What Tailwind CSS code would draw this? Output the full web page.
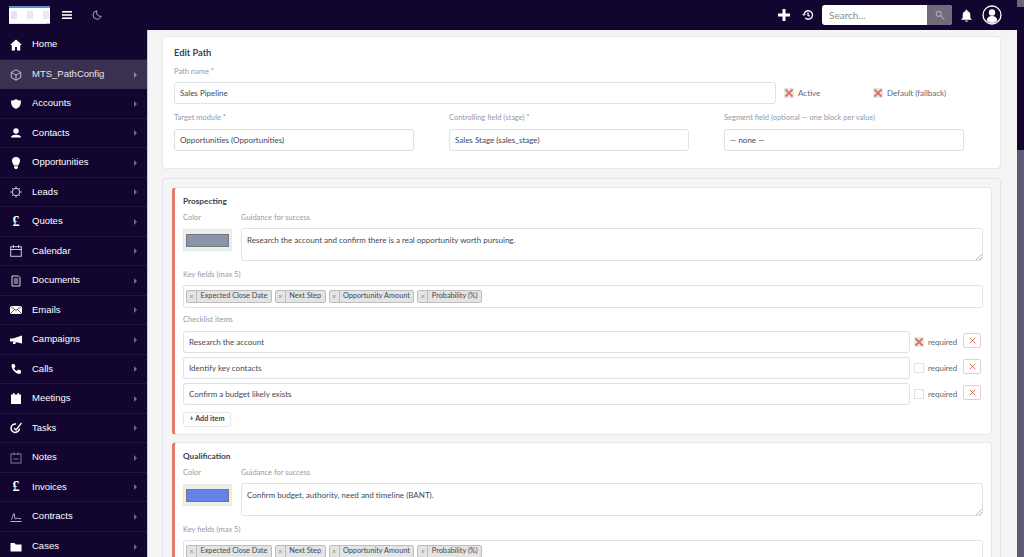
<!DOCTYPE html>
<html lang="en">
<head>
  <meta charset="UTF-8" />
  <title>Edit Path</title>
  <script src="https://cdn.jsdelivr.net/npm/@tailwindcss/browser@4"></script>
</head>
<body class="flex h-[557px] w-[1024px] overflow-hidden bg-[#f4f4f4] font-['Lato',sans-serif] text-[#3f4757]">
 <div class="flex min-w-0 flex-1 flex-col">

  <!-- Top bar -->
  <header class="flex h-[30px] shrink-0 items-center bg-[#12052f] text-white">
    <div class="ml-[9px] flex h-[18px] w-[41px] flex-col bg-white">
      <div class="h-[2px] bg-[#5f8fd0]"></div>
      <div class="flex gap-[10px] pt-[3px] pl-[2px]">
        <div class="h-[8px] w-[6px] bg-[#dfe6f0]"></div>
        <div class="h-[8px] w-[6px] bg-[#e6eaf2]"></div>
        <div class="h-[8px] w-[6px] bg-[#e6eaf2]"></div>
      </div>
      <div class="mt-auto flex h-[1px] justify-end bg-[#e8e4e0]"><div class="h-full w-[4px] bg-[#e9a79c]"></div></div>
    </div>
    <svg class="ml-[12px] h-[10px] w-[10px]" viewBox="0 0 10 10" fill="#fff"><rect y="1" width="10" height="1.6"/><rect y="4.2" width="10" height="1.6"/><rect y="7.4" width="10" height="1.6"/></svg>
    <svg class="ml-[20px] h-[10px] w-[10px]" viewBox="0 0 24 24" fill="none" stroke="#c9c6d2" stroke-width="2"><path d="M12 2a10 10 0 1 0 10 13A9 9 0 0 1 12 2z"/></svg>
    <svg class="ml-auto h-[12px] w-[12px]" viewBox="0 0 12 12" fill="#fff"><rect x="4.500" width="3" height="12"/><rect y="4.500" width="12" height="3"/></svg>
    <svg class="ml-[12px] h-[12px] w-[12px]" viewBox="0 0 24 24" fill="none" stroke="#fff" stroke-width="2.6"><path d="M4 12a8.500 8.500 0 1 1 2.500 6"/><path d="M12 7v5.500l3.500 2"/><path d="M1 10l3 3 3-3" stroke-width="2"/></svg>
    <div class="ml-[8px] flex h-[20px] w-[130px] overflow-hidden rounded-[3px] bg-white">
      <div class="flex flex-1 items-center pl-[7px] text-[10px] text-[#8b8b96]">Search...</div>
      <div class="flex w-[25px] items-center justify-center bg-[#6f6b7c]">
        <svg class="h-[10px] w-[10px]" viewBox="0 0 24 24" fill="none" stroke="#a9a7b3" stroke-width="3"><circle cx="9" cy="9" r="6"/><path d="M14 14l8 8"/></svg>
      </div>
    </div>
    <svg class="ml-[8px] h-[13px] w-[13px]" viewBox="0 0 24 24" fill="#fff"><path d="M12 1.500a2 2 0 0 1 2 2v.6a7 7 0 0 1 5 6.900v5l2.500 3v1h-19v-1l2.500-3v-5a7 7 0 0 1 5-6.900v-.6a2 2 0 0 1 2-2zM9.500 21h5a2.500 2.500 0 0 1-5 0z"/></svg>
    <svg class="mr-[15px] ml-[9px] h-[20px] w-[20px]" viewBox="0 0 20 20" fill="none"><circle cx="10" cy="10" r="9" stroke="#fff" stroke-width="1.300"/><circle cx="10" cy="7.500" r="3.200" fill="#fff"/><path d="M4.500 16c.4-3.500 2.500-5 5.500-5s5.100 1.500 5.500 5a9 9 0 0 1-11 0z" fill="#fff"/></svg>
  </header>

  <div class="flex min-h-0 flex-1">
    <!-- Sidebar -->
    <nav class="w-[147px] shrink-0 bg-[#12052f] pt-[0.25px] font-['Liberation_Sans',sans-serif] text-[9.500px] text-white">
      <a class="flex h-[29.500px] items-center border-b border-[#221640] pl-[10px]">
        <svg class="h-[12px] w-[12px]" viewBox="0 0 24 24" fill="#fff"><path d="M12 1L0 12h3.500v11H10v-7h4v7h6.500V12H24z"/></svg>
        <span class="ml-[10px] flex-1">Home</span>
      </a>
      <a class="flex h-[29.500px] items-center bg-[#3a3050] pl-[10px] text-[#e8e6ee]">
        <svg class="h-[12px] w-[12px]" viewBox="0 0 24 24" fill="none" stroke="#d0cdd8" stroke-width="1.800"><path d="M12 1.500l9.500 5.300v10.400L12 22.500l-9.500-5.300V6.800z"/><path d="M2.500 6.800l9.500 5.400 9.500-5.400M12 12.200v10.300"/></svg>
        <span class="ml-[10px] flex-1">MTS_PathConfig</span>
        <span class="mr-[10px] h-0 w-0 border-y-[3px] border-l-[3px] border-y-transparent border-l-[#8d8799]"></span>
      </a>
      <a class="flex h-[29.500px] items-center border-b border-[#221640] pl-[10px]">
        <svg class="h-[12px] w-[12px]" viewBox="0 0 24 24" fill="#fff"><path d="M12 2c3 2 6 3 10 3 0 8-2 14-10 17C4 19 2 13 2 5c4 0 7-1 10-3z"/></svg>
        <span class="ml-[10px] flex-1">Accounts</span>
        <span class="mr-[10px] h-0 w-0 border-y-[3px] border-l-[3px] border-y-transparent border-l-[#6f6a80]"></span>
      </a>
      <a class="flex h-[29.500px] items-center border-b border-[#221640] pl-[10px]">
        <svg class="h-[12px] w-[12px]" viewBox="0 0 24 24" fill="#fff"><circle cx="12" cy="8" r="5.500"/><path d="M2 21c0-4 5-5.500 10-5.500S22 17 22 21z"/></svg>
        <span class="ml-[10px] flex-1">Contacts</span>
        <span class="mr-[10px] h-0 w-0 border-y-[3px] border-l-[3px] border-y-transparent border-l-[#6f6a80]"></span>
      </a>
      <a class="flex h-[29.500px] items-center border-b border-[#221640] pl-[10px]">
        <svg class="h-[12px] w-[12px]" viewBox="0 0 24 24" fill="#fff"><path d="M12 0a8 8 0 0 1 8 8c0 3.500-2.500 5.500-3.500 9h-9C6.500 13.500 4 11.500 4 8a8 8 0 0 1 8-8zM8 18.500h8V21l-2 3h-4l-2-3z"/></svg>
        <span class="ml-[10px] flex-1">Opportunities</span>
        <span class="mr-[10px] h-0 w-0 border-y-[3px] border-l-[3px] border-y-transparent border-l-[#6f6a80]"></span>
      </a>
      <a class="flex h-[29.500px] items-center border-b border-[#221640] pl-[10px]">
        <svg class="h-[12px] w-[12px]" viewBox="0 0 24 24" fill="none" stroke="#d8d6de" stroke-width="2"><circle cx="12" cy="12" r="7.500"/><path d="M12 1v3M12 20v3M1 12h3M20 12h3M4.500 4.500l2 2M17.500 17.500l2 2M4.500 19.500l2-2M17.500 6.500l2-2"/></svg>
        <span class="ml-[10px] flex-1">Leads</span>
        <span class="mr-[10px] h-0 w-0 border-y-[3px] border-l-[3px] border-y-transparent border-l-[#6f6a80]"></span>
      </a>
      <a class="flex h-[29.500px] items-center border-b border-[#221640] pl-[10px]">
        <span class="w-[12px] text-center font-['Liberation_Serif',serif] text-[14px] font-bold leading-none">£</span>
        <span class="ml-[10px] flex-1">Quotes</span>
        <span class="mr-[10px] h-0 w-0 border-y-[3px] border-l-[3px] border-y-transparent border-l-[#6f6a80]"></span>
      </a>
      <a class="flex h-[29.500px] items-center border-b border-[#221640] pl-[10px]">
        <svg class="h-[12px] w-[12px]" viewBox="0 0 24 24" fill="none" stroke="#e8e6ee" stroke-width="1.800"><rect x="1.500" y="3.500" width="21" height="19"/><path d="M1.500 9h21M7 0v6M17 0v6"/></svg>
        <span class="ml-[10px] flex-1">Calendar</span>
        <span class="mr-[10px] h-0 w-0 border-y-[3px] border-l-[3px] border-y-transparent border-l-[#6f6a80]"></span>
      </a>
      <a class="flex h-[29.500px] items-center border-b border-[#221640] pl-[10px]">
        <svg class="h-[12px] w-[12px]" viewBox="0 0 24 24" fill="none" stroke="#d8d6de" stroke-width="2"><path d="M4 2h13l3 3v17H4z"/><path d="M7.500 8h9M7.500 12h9M7.500 16h9"/></svg>
        <span class="ml-[10px] flex-1">Documents</span>
        <span class="mr-[10px] h-0 w-0 border-y-[3px] border-l-[3px] border-y-transparent border-l-[#6f6a80]"></span>
      </a>
      <a class="flex h-[29.500px] items-center border-b border-[#221640] pl-[10px]">
        <svg class="h-[12px] w-[12px]" viewBox="0 0 24 24"><rect y="4" width="24" height="16" fill="#fff"/><path d="M0 4l12 9 12-9M0 20l9-9M24 20l-9-9" fill="none" stroke="#12052f" stroke-width="1.400"/></svg>
        <span class="ml-[10px] flex-1">Emails</span>
        <span class="mr-[10px] h-0 w-0 border-y-[3px] border-l-[3px] border-y-transparent border-l-[#6f6a80]"></span>
      </a>
      <a class="flex h-[29.500px] items-center border-b border-[#221640] pl-[10px]">
        <svg class="h-[12px] w-[12px]" viewBox="0 0 24 24" fill="#fff"><path d="M0 9h6l18-6v16L6 15H0zM6 16h5v4H6z"/></svg>
        <span class="ml-[10px] flex-1">Campaigns</span>
        <span class="mr-[10px] h-0 w-0 border-y-[3px] border-l-[3px] border-y-transparent border-l-[#6f6a80]"></span>
      </a>
      <a class="flex h-[29.500px] items-center border-b border-[#221640] pl-[10px]">
        <svg class="h-[12px] w-[12px]" viewBox="0 0 24 24" fill="#fff"><path d="M5 2l4 0 2 6-3 2c1 3 3 5 6 6l2-3 6 2v4l-2 3C11 22 3 13 3 4z"/></svg>
        <span class="ml-[10px] flex-1">Calls</span>
        <span class="mr-[10px] h-0 w-0 border-y-[3px] border-l-[3px] border-y-transparent border-l-[#6f6a80]"></span>
      </a>
      <a class="flex h-[29.500px] items-center border-b border-[#221640] pl-[10px]">
        <svg class="h-[12px] w-[12px]" viewBox="0 0 24 24" fill="#fff"><path d="M2 3h4V0h3v3h6V0h3v3h4v19H2z"/></svg>
        <span class="ml-[10px] flex-1">Meetings</span>
        <span class="mr-[10px] h-0 w-0 border-y-[3px] border-l-[3px] border-y-transparent border-l-[#6f6a80]"></span>
      </a>
      <a class="flex h-[29.500px] items-center border-b border-[#221640] pl-[10px]">
        <svg class="h-[12px] w-[12px]" viewBox="0 0 24 24" fill="none" stroke="#fff" stroke-width="3"><path d="M19 13a8.500 8.500 0 1 1-7-9"/><path d="M8 12l4 4L23 2" stroke-width="2.600"/></svg>
        <span class="ml-[10px] flex-1">Tasks</span>
        <span class="mr-[10px] h-0 w-0 border-y-[3px] border-l-[3px] border-y-transparent border-l-[#6f6a80]"></span>
      </a>
      <a class="flex h-[29.500px] items-center border-b border-[#221640] pl-[10px]">
        <svg class="h-[12px] w-[12px]" viewBox="0 0 24 24" fill="none" stroke="#8f8a9c" stroke-width="1.800"><rect x="2" y="4" width="20" height="18"/><path d="M8 1v5M16 1v5M7 14h10"/></svg>
        <span class="ml-[10px] flex-1">Notes</span>
        <span class="mr-[10px] h-0 w-0 border-y-[3px] border-l-[3px] border-y-transparent border-l-[#6f6a80]"></span>
      </a>
      <a class="flex h-[29.500px] items-center border-b border-[#221640] pl-[10px]">
        <span class="w-[12px] text-center font-['Liberation_Serif',serif] text-[14px] font-bold leading-none">£</span>
        <span class="ml-[10px] flex-1">Invoices</span>
        <span class="mr-[10px] h-0 w-0 border-y-[3px] border-l-[3px] border-y-transparent border-l-[#6f6a80]"></span>
      </a>
      <a class="flex h-[29.500px] items-center border-b border-[#221640] pl-[10px]">
        <svg class="h-[12px] w-[12px]" viewBox="0 0 24 24" fill="none" stroke="#e8e6ee" stroke-width="1.600"><path d="M1 21h22"/><path d="M2 17c3 0 4-12 6-12s0 11 3 11 2-3 4-2 3 2 7 1"/></svg>
        <span class="ml-[10px] flex-1">Contracts</span>
        <span class="mr-[10px] h-0 w-0 border-y-[3px] border-l-[3px] border-y-transparent border-l-[#6f6a80]"></span>
      </a>
      <a class="flex h-[29.500px] items-center pl-[10px]">
        <svg class="h-[12px] w-[12px]" viewBox="0 0 24 24" fill="#fff"><path d="M1 4h8l2.500 3H23v14H1z"/></svg>
        <span class="ml-[10px] flex-1">Cases</span>
        <span class="mr-[10px] h-0 w-0 border-y-[3px] border-l-[3px] border-y-transparent border-l-[#6f6a80]"></span>
      </a>
    </nav>

    <div class="w-[1px] shrink-0 bg-[#c9c9d0]"></div>

    <!-- Content -->
    <main class="min-w-0 flex-1 overflow-hidden pt-[6px] pr-[16px] pl-[14px]">
      <section class="h-[133px] rounded-[4px] border border-[#e8e8ea] bg-white pt-[10px] pl-[11px]">
        <h2 class="text-[9.250px] leading-[12px] font-bold text-[#3a4252]">Edit Path</h2>
        <label class="mt-[7px] block pt-[1px] text-[7.500px] leading-[10px] text-[#949aa8]">Path name *</label>
        <div class="mt-[5px] flex items-center">
          <div class="flex h-[22px] w-[602px] items-center rounded-[3px] border border-[#dfe1e8] pl-[5px] text-[8px]">Sales Pipeline</div>
          <svg class="ml-[8px] h-[10px] w-[10px] bg-[#e8e8e8]" viewBox="0 0 10 10" fill="none" stroke="#e0705f" stroke-width="1.800"><path d="M1.500 1.500l7 7M8.500 1.500l-7 7"/></svg>
          <span class="ml-[4px] w-[75px] text-[8px] text-[#5f6676]">Active</span>
          <svg class="h-[10px] w-[10px] bg-[#e8e8e8]" viewBox="0 0 10 10" fill="none" stroke="#e0705f" stroke-width="1.800"><path d="M1.500 1.500l7 7M8.500 1.500l-7 7"/></svg>
          <span class="ml-[4px] text-[8px] text-[#5f6676]">Default (fallback)</span>
        </div>
        <div class="mt-[8px] flex gap-[35px]">
          <div class="w-[240px]">
            <label class="block pt-[1px] text-[7.500px] leading-[10px] text-[#949aa8]">Target module *</label>
            <div class="mt-[6px] flex h-[22px] items-center rounded-[3px] border border-[#dfe1e8] pl-[5px] text-[8px]">Opportunities (Opportunities)</div>
          </div>
          <div class="w-[240px]">
            <label class="block pt-[1px] text-[7.500px] leading-[10px] text-[#949aa8]">Controlling field (stage) *</label>
            <div class="mt-[6px] flex h-[22px] items-center rounded-[3px] border border-[#dfe1e8] pl-[5px] text-[8px]">Sales Stage (sales_stage)</div>
          </div>
          <div class="w-[240px]">
            <label class="block pt-[1px] text-[7.500px] leading-[10px] text-[#949aa8]">Segment field (optional — one block per value)</label>
            <div class="mt-[6px] flex h-[22px] items-center rounded-[3px] border border-[#dfe1e8] pl-[5px] text-[8px]">— none —</div>
          </div>
        </div>
      </section>

      <section class="mt-[9px] rounded-[4px] border border-[#e1e4ec] bg-[#f5f5f5] pt-[8px] pr-[8px] pb-[8px] pl-[9px]">
        <!-- Prospecting -->
        <div class="h-[248px] rounded-[4px] border border-l-[3px] border-[#e8e8ea] border-l-[#df7a6c] bg-white pt-[8px] pl-[8px]">
          <h3 class="text-[8.250px] leading-[11px] font-bold text-[#3a4252]">Prospecting</h3>
          <div class="mt-[5px] flex">
            <div class="w-[58px]">
              <label class="block pt-[1px] text-[7.500px] leading-[10px] text-[#949aa8]">Color</label>
              <div class="mt-[6px] flex h-[22px] w-[49px] items-center justify-center border border-[#dcefe9] bg-[#eeeeee]"><div class="h-[13px] w-[43px] border border-[#777] bg-[#8c94ad]"></div></div>
            </div>
            <div class="w-[742px]">
              <label class="block pt-[1px] text-[7.500px] leading-[10px] text-[#949aa8]">Guidance for success</label>
              <div class="relative mt-[5px] h-[33px] rounded-[3px] border border-[#dfe1e8] pt-[5px] pl-[5px] text-[8px] leading-[12px]">Research the account and confirm there is a real opportunity worth pursuing.
                <svg class="absolute right-0 bottom-0 h-[6px] w-[6px]" viewBox="0 0 6 6" stroke="#999" stroke-width=".7"><path d="M0 6l6-6M3 6l3-3"/></svg>
              </div>
            </div>
          </div>
          <label class="mt-[8px] block pt-[1px] text-[7.500px] leading-[10px] text-[#949aa8]">Key fields (max 5)</label>
          <div class="mt-[5px] flex h-[23px] w-[800px] items-start gap-[3px] rounded-[3px] border border-[#dfe1e8] pt-[4px] pl-[2px] text-[7.300px]">
            <span class="flex h-[13px] items-center rounded-[2px] border border-[#bdbdbd] bg-[#e4e4e4]"><span class="flex h-full w-[10px] items-center justify-center border-r border-[#bdbdbd] text-[7px] text-[#888]">×</span><span class="px-[3.500px]">Expected Close Date</span></span>
            <span class="flex h-[13px] items-center rounded-[2px] border border-[#bdbdbd] bg-[#e4e4e4]"><span class="flex h-full w-[10px] items-center justify-center border-r border-[#bdbdbd] text-[7px] text-[#888]">×</span><span class="px-[3.500px]">Next Step</span></span>
            <span class="flex h-[13px] items-center rounded-[2px] border border-[#bdbdbd] bg-[#e4e4e4]"><span class="flex h-full w-[10px] items-center justify-center border-r border-[#bdbdbd] text-[7px] text-[#888]">×</span><span class="px-[3.500px]">Opportunity Amount</span></span>
            <span class="flex h-[13px] items-center rounded-[2px] border border-[#bdbdbd] bg-[#e4e4e4]"><span class="flex h-full w-[10px] items-center justify-center border-r border-[#bdbdbd] text-[7px] text-[#888]">×</span><span class="px-[3.500px]">Probability (%)</span></span>
          </div>
          <label class="mt-[6px] block pt-[1px] text-[7.500px] leading-[10px] text-[#949aa8]">Checklist items</label>
          <div class="mt-[6px] flex flex-col gap-[4px]">
            <div class="flex h-[22px] items-center">
              <div class="flex h-full w-[727px] items-center rounded-[3px] border border-[#dfe1e8] pl-[5px] text-[8px]">Research the account</div>
              <svg class="ml-[4px] h-[10px] w-[10px] bg-[#e8e8e8]" viewBox="0 0 10 10" fill="none" stroke="#e0705f" stroke-width="1.800"><path d="M1.500 1.500l7 7M8.500 1.500l-7 7"/></svg>
              <span class="ml-[4px] w-[35px] text-[8px] text-[#5f6676]">required</span>
              <span class="mb-[3px] flex h-[15px] w-[18px] items-center justify-center rounded-[2px] border border-[#eecbc6]"><svg class="h-[7px] w-[7px]" viewBox="0 0 10 10" fill="none" stroke="#d9675a" stroke-width="1.300"><path d="M1 1l8 8M9 1l-8 8"/></svg></span>
            </div>
            <div class="flex h-[22px] items-center">
              <div class="flex h-full w-[727px] items-center rounded-[3px] border border-[#dfe1e8] pl-[5px] text-[8px]">Identify key contacts</div>
              <span class="ml-[4px] h-[10px] w-[10px] border border-[#dfe1e8]"></span>
              <span class="ml-[4px] w-[35px] text-[8px] text-[#5f6676]">required</span>
              <span class="mb-[3px] flex h-[15px] w-[18px] items-center justify-center rounded-[2px] border border-[#eecbc6]"><svg class="h-[7px] w-[7px]" viewBox="0 0 10 10" fill="none" stroke="#d9675a" stroke-width="1.300"><path d="M1 1l8 8M9 1l-8 8"/></svg></span>
            </div>
            <div class="flex h-[22px] items-center">
              <div class="flex h-full w-[727px] items-center rounded-[3px] border border-[#dfe1e8] pl-[5px] text-[8px]">Confirm a budget likely exists</div>
              <span class="ml-[4px] h-[10px] w-[10px] border border-[#dfe1e8]"></span>
              <span class="ml-[4px] w-[35px] text-[8px] text-[#5f6676]">required</span>
              <span class="mb-[3px] flex h-[15px] w-[18px] items-center justify-center rounded-[2px] border border-[#eecbc6]"><svg class="h-[7px] w-[7px]" viewBox="0 0 10 10" fill="none" stroke="#d9675a" stroke-width="1.300"><path d="M1 1l8 8M9 1l-8 8"/></svg></span>
            </div>
          </div>
          <button class="mt-[7px] flex h-[15px] w-[48px] items-center justify-center rounded-[3px] border border-[#e6e6ea] text-[7.250px] font-bold text-[#3a4252]">+ Add item</button>
        </div>

        <!-- Qualification -->
        <div class="mt-[7px] h-[249px] rounded-[4px] border border-l-[3px] border-[#e8e8ea] border-l-[#df7a6c] bg-white pt-[8px] pl-[8px]">
          <h3 class="text-[8.250px] leading-[11px] font-bold text-[#3a4252]">Qualification</h3>
          <div class="mt-[5px] flex">
            <div class="w-[58px]">
              <label class="block pt-[1px] text-[7.500px] leading-[10px] text-[#949aa8]">Color</label>
              <div class="mt-[6px] flex h-[22px] w-[49px] items-center justify-center border border-[#dcefe9] bg-[#eeeeee]"><div class="h-[13px] w-[43px] border border-[#777] bg-[#6482e8]"></div></div>
            </div>
            <div class="w-[742px]">
              <label class="block pt-[1px] text-[7.500px] leading-[10px] text-[#949aa8]">Guidance for success</label>
              <div class="relative mt-[5px] h-[33px] rounded-[3px] border border-[#dfe1e8] pt-[5px] pl-[5px] text-[8px] leading-[12px]">Confirm budget, authority, need and timeline (BANT).
                <svg class="absolute right-0 bottom-0 h-[6px] w-[6px]" viewBox="0 0 6 6" stroke="#999" stroke-width=".7"><path d="M0 6l6-6M3 6l3-3"/></svg>
              </div>
            </div>
          </div>
          <label class="mt-[8px] block pt-[1px] text-[7.500px] leading-[10px] text-[#949aa8]">Key fields (max 5)</label>
          <div class="mt-[5px] flex h-[23px] w-[800px] items-start gap-[3px] rounded-[3px] border border-[#dfe1e8] pt-[4px] pl-[2px] text-[7.300px]">
            <span class="flex h-[13px] items-center rounded-[2px] border border-[#bdbdbd] bg-[#e4e4e4]"><span class="flex h-full w-[10px] items-center justify-center border-r border-[#bdbdbd] text-[7px] text-[#888]">×</span><span class="px-[3.500px]">Expected Close Date</span></span>
            <span class="flex h-[13px] items-center rounded-[2px] border border-[#bdbdbd] bg-[#e4e4e4]"><span class="flex h-full w-[10px] items-center justify-center border-r border-[#bdbdbd] text-[7px] text-[#888]">×</span><span class="px-[3.500px]">Next Step</span></span>
            <span class="flex h-[13px] items-center rounded-[2px] border border-[#bdbdbd] bg-[#e4e4e4]"><span class="flex h-full w-[10px] items-center justify-center border-r border-[#bdbdbd] text-[7px] text-[#888]">×</span><span class="px-[3.500px]">Opportunity Amount</span></span>
            <span class="flex h-[13px] items-center rounded-[2px] border border-[#bdbdbd] bg-[#e4e4e4]"><span class="flex h-full w-[10px] items-center justify-center border-r border-[#bdbdbd] text-[7px] text-[#888]">×</span><span class="px-[3.500px]">Probability (%)</span></span>
          </div>
        </div>
      </section>
    </main>
  </div>
 </div>

 <!-- Scrollbars on the right edge -->
 <div class="flex w-[7px] shrink-0 flex-col bg-[#12052f]">
   <div class="h-[7px] bg-[#6a6678]"></div>
   <div class="mt-[143px] flex-1 bg-[#5f5a73]"></div>
 </div>
</body>
</html>
